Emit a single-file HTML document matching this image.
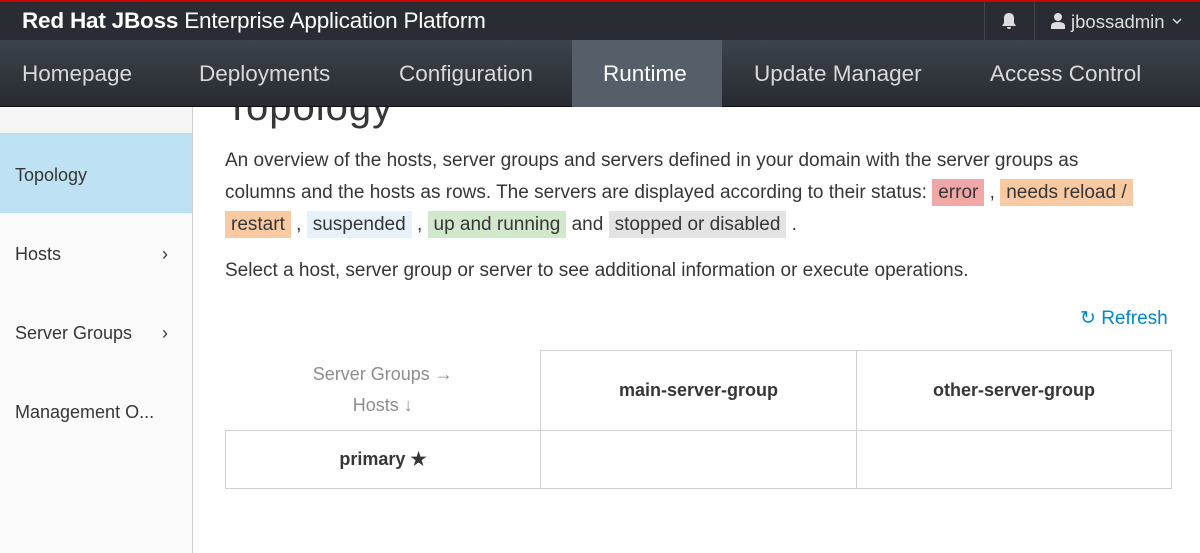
<!DOCTYPE html>
<html><head><style>
*{margin:0;padding:0;box-sizing:border-box}
body{width:1200px;height:553px;overflow:hidden;background:#fff;font-family:"Liberation Sans",sans-serif;color:#363636;position:relative}
.top{position:absolute;left:0;top:0;width:1200px;height:40px;background:#292d33;border-top:2px solid #c00;z-index:3}
.brand{position:absolute;left:22px;top:6px;color:#fff;font-size:22.5px;letter-spacing:-0.2px}
.sep{position:absolute;top:0;width:1px;height:38px;background:#40454c}
.nav{position:absolute;left:0;top:40px;width:1200px;height:67px;background:linear-gradient(#3d434b,#272b31);border-bottom:1px solid #111;z-index:2}
.nav span{position:absolute;top:21px;color:#d8d8d8;font-size:22.5px}
.act{position:absolute;left:572px;top:0;width:150px;height:67px;background:#565f69}
.side{position:absolute;left:0;top:107px;width:193px;height:446px;background:#fafafa;border-right:1px solid #d1d1d1}
.side .hd{height:27px;border-bottom:1px solid #d1d1d1;background:#f5f5f5}
.it{height:79px;font-size:18px;line-height:82px;padding-left:15px;position:relative;color:#363636}
.it.sel{background:#bee1f4}
.it i{position:absolute;right:24px;font-style:normal;font-size:18px}
.c{position:absolute;left:225px;font-size:18.5px;color:#363636}
.b{padding:3px 6px}
table{position:absolute;left:225px;top:350px;border-collapse:collapse;font-size:18px}
td{border:1px solid #d1d1d1;text-align:center}
</style></head><body>
<div class="top">
<div class="brand"><b>Red Hat JBoss</b> Enterprise Application Platform</div>
<div class="sep" style="left:984px"></div><div class="sep" style="left:1034px"></div>
<svg style="position:absolute;left:1001px;top:10px" width="16" height="18" viewBox="0 0 16 18"><path d="M8 1c-3 0-5 2-5 5v5l-2 3h14l-2-3V6c0-3-2-5-5-5z M6 15a2 2 0 0 0 4 0z" fill="#ddd"/></svg>
<svg style="position:absolute;left:1051px;top:10px" width="14" height="17" viewBox="0 0 14 17"><circle cx="7" cy="5" r="4" fill="#ddd"/><path d="M0 17v-3c0-3 3-4 7-4s7 1 7 4v3z" fill="#ddd"/></svg>
<div style="position:absolute;left:1071px;top:9px;color:#ddd;font-size:18.5px">jbossadmin</div>
<svg style="position:absolute;left:1172px;top:15px" width="10" height="8"><path d="M1 2l4 4 4-4" stroke="#ddd" stroke-width="1.5" fill="none"/></svg>
</div>
<div style="position:absolute;left:225px;top:85px;font-size:40px;color:#363636;z-index:0;letter-spacing:1px">Topology</div>
<div class="nav">
<div class="act"></div>
<span style="left:22px">Homepage</span><span style="left:199px">Deployments</span><span style="left:399px">Configuration</span><span style="left:603px;color:#fff">Runtime</span><span style="left:754px">Update Manager</span><span style="left:990px">Access Control</span>
</div>
<div class="side">
<div class="hd"></div>
<div class="it sel">Topology</div>
<div class="it">Hosts<i>›</i></div>
<div class="it">Server Groups<i>›</i></div>
<div class="it">Management O...</div>
</div>
<div class="c" style="top:145px;line-height:32px;width:960px;font-size:19px">An overview of the hosts, server groups and servers defined in your domain with the server groups as<br>columns and the hosts as rows. The servers are displayed according to their status: <span class="b" style="background:#f0a7a7">error</span> , <span class="b" style="background:#f9c9a1">needs reload /</span><br><span class="b" style="background:#f9c9a1">restart</span> , <span class="b" style="background:#e6f1fa">suspended</span> , <span class="b" style="background:#d2e8cc">up and running</span> and <span class="b" style="background:#e3e3e3">stopped or disabled</span> .</div>
<div class="c" style="top:260px;font-size:19px">Select a host, server group or server to see additional information or execute operations.</div>
<div style="position:absolute;left:1080px;top:307px;color:#0088ce;font-size:19px">&#x21bb; Refresh</div>
<table>
<tr style="height:80px"><td style="width:315px;border-top:none;border-left:none;color:#8b8d8f;line-height:31px">Server Groups →<br>Hosts ↓</td><td style="width:316px;font-weight:bold">main-server-group</td><td style="width:315px;font-weight:bold">other-server-group</td></tr>
<tr style="height:58px"><td style="font-weight:bold">primary ★</td><td></td><td></td></tr>
</table>
</body></html>
